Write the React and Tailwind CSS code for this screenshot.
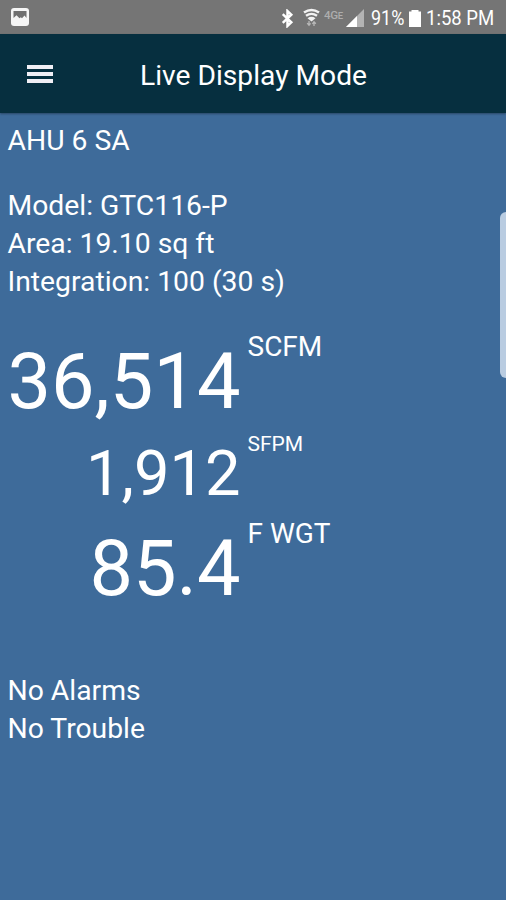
function StatusBar() {
  return (
    <div className="flex h-[34px] shrink-0 items-center bg-[#757575] pl-[11px] pr-[9px] text-white">
      <svg width="18" height="18" viewBox="0 0 18 18">
        <rect x="0" y="0" width="18" height="18" rx="3" fill="#f5f5f5" />
        <path d="M2.500 3h13v7l-2-2.500-2.500 2.800-1.200-1-1.300 1-3-3L2.500 10z" fill="#6f6f6f" />
      </svg>
      <svg className="ml-auto mt-[2px]" width="13" height="19" viewBox="0 0 13 20" fill="none" stroke="#fff" strokeWidth="2.600">
        <path d="M1.500 5.500l9 8.500-4 3.800V2.200l4 3.800-9 8.500" />
      </svg>
      <svg className="ml-[9px] mt-[1px]" width="17" height="20" viewBox="0 0 17 20">
        <path d="M1 4.500Q8.500-.5 16 4.500" fill="none" stroke="#f2f2f2" strokeWidth="2.600" />
        <path d="M3 7.800Q8.500 4 14 7.800" fill="none" stroke="#f2f2f2" strokeWidth="2.400" />
        <path d="M4.500 10.200Q8.500 7.500 12.500 10.200L8.500 13.500z" fill="#f2f2f2" />
        <path d="M6 13v4M4.200 15.200L6 17.300l1.600-2M11 18v-4M9.400 15.800l1.600-2 1.800 2" fill="none" stroke="#b8b8b8" strokeWidth="1.300" />
      </svg>
      <span className="ml-[4px] mt-[-3px] w-[20px] text-[11px] font-medium leading-[12px] text-[#adadad]">
        <span className="inline-block origin-left scale-x-[1.050] whitespace-nowrap tracking-[-0.3px]">4G<span className="text-[9px]">E</span></span>
      </span>
      <svg className="ml-[2px] mt-[2px]" width="18" height="18" viewBox="0 0 18 18">
        <path d="M0 18L18 0v18z" fill="#b3b3b3" />
        <path d="M0 18L11 7v11z" fill="#fff" />
      </svg>
      <span className="ml-[7px] mt-[4px] w-[35px] whitespace-nowrap text-[19.500px] leading-[24px]">
        <span className="inline-block origin-left scale-x-[0.920]">91%</span>
      </span>
      <svg className="ml-[3px] mt-[2px]" width="12" height="17" viewBox="0 0 12 17">
        <path d="M2.500 0h7v1.500H12V17H0V1.500h2.500z" fill="#fff" />
      </svg>
      <span className="ml-[5px] mt-[4px] w-[71px] whitespace-nowrap text-[19.500px] leading-[24px]">
        <span className="inline-block origin-left scale-x-[0.950]">1:58 PM</span>
      </span>
    </div>
  );
}

function Header() {
  return (
    <header className="relative flex h-[79px] shrink-0 items-center bg-[#062f3f] pl-[27px] shadow-[0_1px_2px_rgba(0,0,0,0.35)]">
      <button className="flex w-[26px] flex-col gap-[3px]" aria-label="Menu">
        <span className="h-[4px] w-full bg-[#f0eff5]" />
        <span className="h-[4px] w-full bg-[#f0eff5]" />
        <span className="h-[4px] w-full bg-[#f0eff5]" />
      </button>
      <h1 className="ml-[87px] mt-[4px] whitespace-nowrap text-[28.200px] leading-[38px]">Live Display Mode</h1>
    </header>
  );
}

export default function App() {
  return (
    <div className="relative flex h-[900px] w-[506px] flex-col overflow-hidden bg-[#3e6b9a] font-[Roboto,sans-serif] text-white">
      <StatusBar />
      <Header />
      <main className="px-[7.500px] pt-[9px] text-[28.300px] leading-[38px]">
        <p>AHU 6 SA</p>
        <div className="mt-[27px]">
          <p>Model: GTC116-P</p>
          <p>Area: 19.10 sq ft</p>
          <p>Integration: 100 (30 s)</p>
        </div>
        <div className="mt-[27px] flex h-[102px] items-start">
          <span className="mt-[15px] w-[233px] whitespace-nowrap text-right text-[77.500px] leading-[78px]">36,514</span>
          <span className="ml-[7px] text-[28px]">SCFM</span>
        </div>
        <div className="flex h-[85px] items-start">
          <span className="mt-[11px] w-[233px] text-right text-[63.200px] leading-[64px]">1,912</span>
          <span className="ml-[7px] text-[21px] leading-[28px]">SFPM</span>
        </div>
        <div className="flex h-[157px] items-start">
          <span className="mt-[15px] w-[233px] text-right text-[77.500px] leading-[78px]">85.4</span>
          <span className="ml-[7px] text-[28px]">F WGT</span>
        </div>
        <p>No Alarms</p>
        <p>No Trouble</p>
      </main>
      <div className="absolute right-0 top-[212px] h-[166px] w-[6px] rounded-l-[6px] bg-[#b9cce1]" />
    </div>
  );
}
